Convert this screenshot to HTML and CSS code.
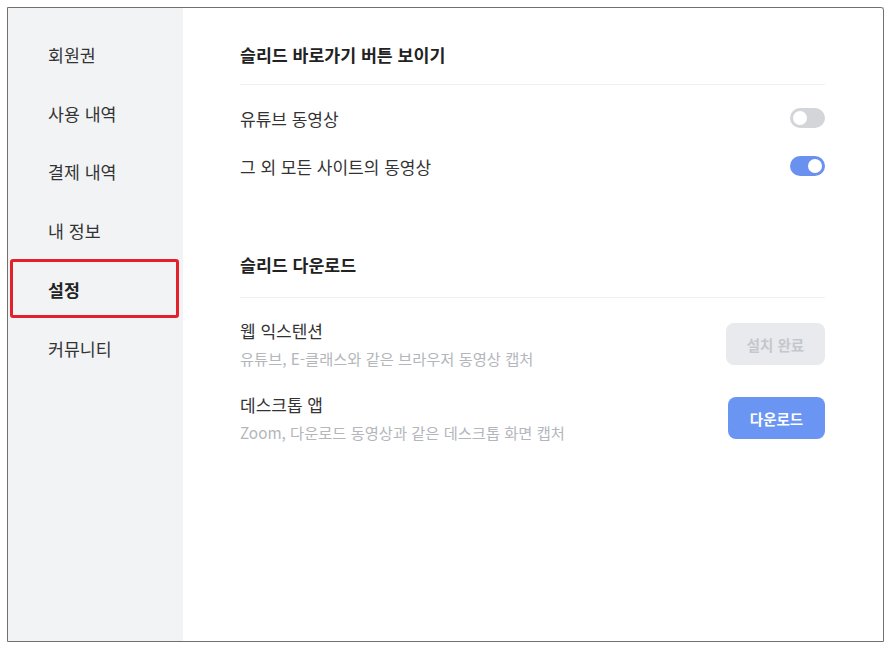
FILE: index.html
```html
<!DOCTYPE html>
<html lang="ko">
<head>
    <meta charset="UTF-8">
    <meta name="viewport" content="width=device-width, initial-scale=1.0">
    <title>설정</title>
    <link rel="stylesheet" href="styles.css">
</head>
<body>

    <div class="settings-window">
        <nav class="side-nav">
            <a href="#" class="nav-item">회원권</a>
            <a href="#" class="nav-item">사용 내역</a>
            <a href="#" class="nav-item">결제 내역</a>
            <a href="#" class="nav-item">내 정보</a>
            <a href="#" class="nav-item active">설정</a>
            <a href="#" class="nav-item">커뮤니티</a>
        </nav>

        <main class="settings-main">
            <section class="settings-section">
                <h3 class="section-title">슬리드 바로가기 버튼 보이기</h3>
                <div class="toggle-row">
                    <span>유튜브 동영상</span>
                    <label class="toggle">
                        <input type="checkbox">
                        <span class="slider"></span>
                    </label>
                </div>
                <div class="toggle-row">
                    <span>그 외 모든 사이트의 동영상</span>
                    <label class="toggle">
                        <input type="checkbox" checked>
                        <span class="slider"></span>
                    </label>
                </div>
            </section>

            <section class="settings-section download-section">
                <h3 class="section-title">슬리드 다운로드</h3>
                <div class="download-row">
                    <div class="download-info">
                        <div class="download-name">웹 익스텐션</div>
                        <div class="download-desc">유튜브, E-클래스와 같은 브라우저 동영상 캡처</div>
                    </div>
                    <button class="btn btn-done" disabled>설치 완료</button>
                </div>
                <div class="download-row">
                    <div class="download-info">
                        <div class="download-name">데스크톱 앱</div>
                        <div class="download-desc">Zoom, 다운로드 동영상과 같은 데스크톱 화면 캡처</div>
                    </div>
                    <button class="btn btn-primary">다운로드</button>
                </div>
            </section>
        </main>
    </div>

</body>
</html>
```

FILE: styles.css
```css
/* General */
body {
    font-family: "Noto Sans CJK KR", "Noto Sans", sans-serif;
    background: #ffffff;
    color: #333333;
    margin: 7px;
}

/* Window frame */
.settings-window {
    display: flex;
    width: 875px;
    height: 633px;
    background: #ffffff;
    border: 1px solid #707070;
    border-radius: 0 3px 0 0;
    outline: 2px solid rgba(0, 0, 0, 0.16);
    overflow: hidden;
}

/* Sidebar */
.side-nav {
    width: 175px;
    background: #f2f3f5;
    padding-top: 17px;
    display: flex;
    flex-direction: column;
}

.nav-item {
    position: relative;
    display: flex;
    align-items: center;
    height: 58.8px;
    padding-left: 40px;
    font-size: 17.3px;
    color: #333333;
    text-decoration: none;
}

.nav-item.active {
    font-weight: bold;
    color: #222222;
}

/* red highlight box around the current item */
.nav-item.active::after {
    content: "";
    position: absolute;
    top: -1px;
    bottom: 1px;
    left: 2px;
    right: 4px;
    border: 3px solid #e3212b;
    border-radius: 3px;
}

/* Main area */
.settings-main {
    flex: 1;
    padding: 34px 58px 0 57px;
}

.section-title {
    margin: 0;
    font-size: 17.3px;
    line-height: 26px;
    font-weight: bold;
    color: #222222;
    padding-bottom: 16px;
    border-bottom: 1px solid #eeeff1;
}

.settings-section:first-child .section-title {
    margin-bottom: 9px;
}

.toggle-row {
    display: flex;
    justify-content: space-between;
    align-items: center;
    height: 48px;
    font-size: 17px;
}

/* Toggle switch */
.toggle {
    position: relative;
    width: 35px;
    height: 20px;
}

.toggle input {
    display: none;
}

.slider {
    position: absolute;
    inset: 0;
    background: #d3d5d9;
    border-radius: 10px;
}

.slider::before {
    content: "";
    position: absolute;
    top: 3px;
    left: 3px;
    width: 14px;
    height: 14px;
    background: white;
    border-radius: 50%;
}

.toggle input:checked + .slider {
    background: #6a91f0;
}

.toggle input:checked + .slider::before {
    left: 18px;
}

/* Download section */
.download-section {
    margin-top: 62px;
}

.download-section .section-title {
    padding-bottom: 19px;
    margin-bottom: 21px;
}

.download-row {
    display: flex;
    justify-content: space-between;
    align-items: center;
    margin-bottom: 24px;
}

.download-name {
    font-size: 17px;
    line-height: 24px;
}

.download-desc {
    margin-top: 4px;
    font-size: 15.3px;
    line-height: 22px;
    color: #b3b6bb;
}

.btn {
    height: 42px;
    border: none;
    border-radius: 8px;
    font-family: inherit;
    font-size: 14.5px;
    font-weight: bold;
    cursor: pointer;
}

.btn-done {
    width: 99px;
    background: #e9eaed;
    color: #c4c7cc;
    cursor: default;
}

.btn-primary {
    width: 97px;
    background: #6b95f2;
    color: white;
}

.btn-primary:hover {
    background: #5a86ea;
}
```
